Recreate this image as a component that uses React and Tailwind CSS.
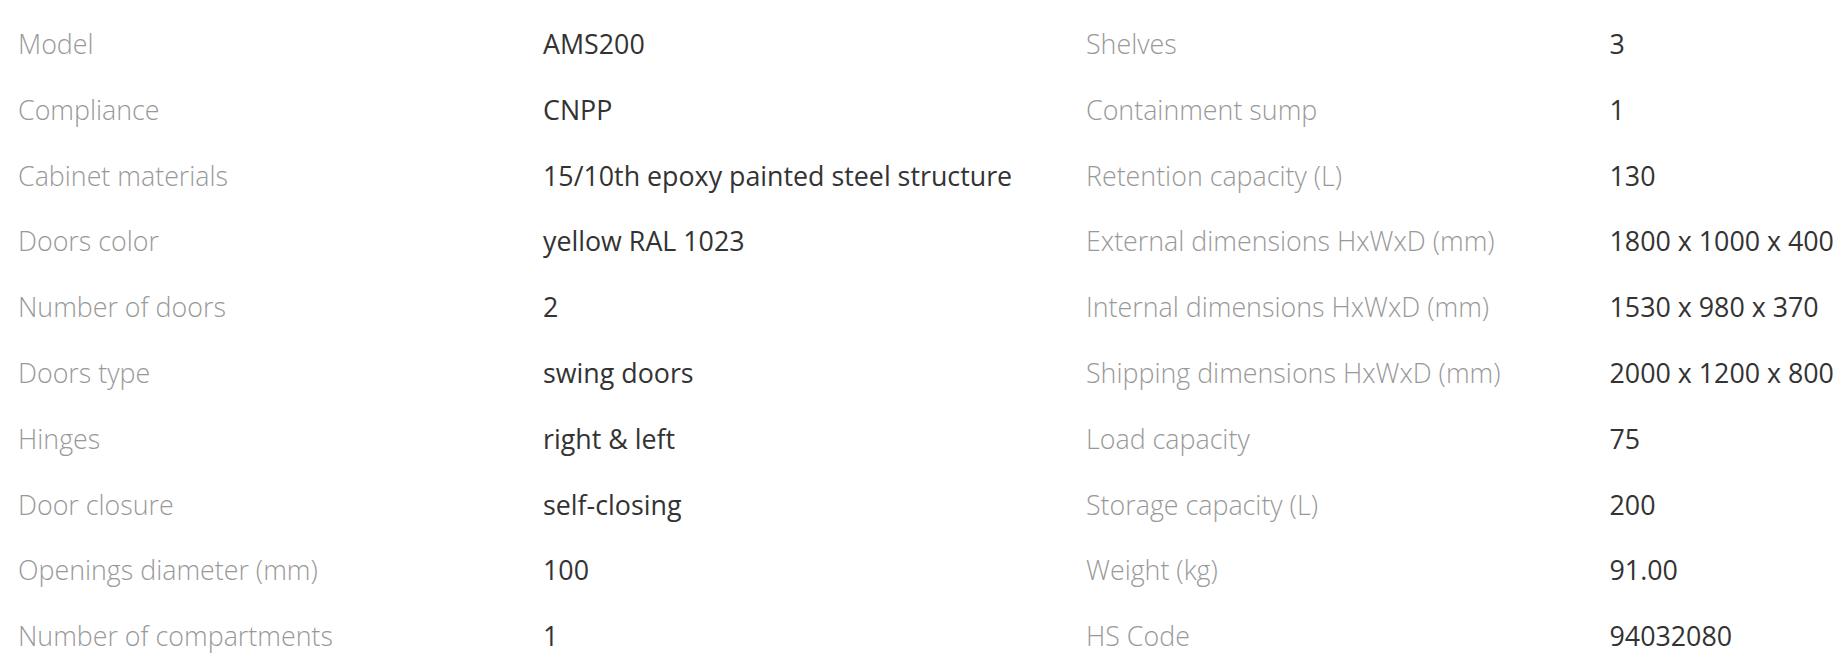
import React from "react";

const left = [
  ["Model", "AMS200"],
  ["Compliance", "CNPP"],
  ["Cabinet materials", "15/10th epoxy painted steel structure"],
  ["Doors color", "yellow RAL 1023"],
  ["Number of doors", "2"],
  ["Doors type", "swing doors"],
  ["Hinges", "right & left"],
  ["Door closure", "self-closing"],
  ["Openings diameter (mm)", "100"],
  ["Number of compartments", "1"],
];

const right = [
  ["Shelves", "3"],
  ["Containment sump", "1"],
  ["Retention capacity (L)", "130"],
  ["External dimensions HxWxD (mm)", "1800 x 1000 x 400"],
  ["Internal dimensions HxWxD (mm)", "1530 x 980 x 370"],
  ["Shipping dimensions HxWxD (mm)", "2000 x 1200 x 800"],
  ["Load capacity", "75"],
  ["Storage capacity (L)", "200"],
  ["Weight (kg)", "91.00"],
  ["HS Code", "94032080"],
];

export default function App() {
  return (
    <div className="bg-white min-h-screen pt-[11px] pl-[18px] font-['Open_Sans',sans-serif] text-[26.8px] whitespace-nowrap overflow-hidden">
      <div className="grid grid-cols-[525px_543px_523.5px_1fr]">
        {left.map(([label, value], i) => (
          <React.Fragment key={label}>
            <div className="h-[65.8px] leading-[65.8px] font-light text-[#999999]">{label}</div>
            <div className="h-[65.8px] leading-[65.8px] text-[#333333]">{value}</div>
            <div className="h-[65.8px] leading-[65.8px] font-light text-[#999999]">{right[i][0]}</div>
            <div className="h-[65.8px] leading-[65.8px] text-[#333333]">{right[i][1]}</div>
          </React.Fragment>
        ))}
      </div>
    </div>
  );
}
